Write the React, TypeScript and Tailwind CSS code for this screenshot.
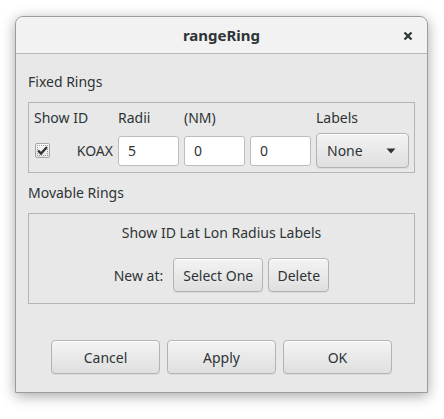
import React from "react";

const font = { fontFamily: '"Noto Sans", "Open Sans", sans-serif' };

function Btn({ children, className = "" }: { children: React.ReactNode; className?: string }) {
  return (
    <div
      className={`flex items-center rounded-[4px] border border-[#b3b3b3] bg-gradient-to-b from-[#f3f3f3] to-[#dfdfdf] text-[14px] text-[#2e3436] shadow-[inset_0_1px_0_#ffffff,0_1px_0_rgba(0,0,0,0.06)] ${className}`}
    >
      {children}
    </div>
  );
}

function Input({ value }: { value: string }) {
  return (
    <div className="flex h-[30px] w-[61px] items-center rounded-[3px] border border-[#bdbdbd] bg-white pl-[9px] text-[14px] text-[#2e3436]">
      {value}
    </div>
  );
}

export default function App() {
  return (
    <div className="h-[419px] w-[444px] bg-white pl-[15px] pt-[16px]" style={font}>
      <div className="flex h-[377px] w-[413px] flex-col overflow-hidden rounded-t-[8px] border border-[#9c9c9c] bg-[#e8e8e8] shadow-[0_3px_14px_rgba(0,0,0,0.35)]">
        {/* Title bar */}
        <div className="relative flex h-[37px] shrink-0 items-center justify-center border-b border-[#b9b9b9] bg-[#f2f2f2]">
          <span className="text-[15px] font-bold text-[#2e3436]">rangeRing</span>
          <svg className="absolute right-[14px] top-[14px]" width="10" height="10" viewBox="0 0 10 10">
            <path d="M1.5 1.5 L8.5 8.5 M8.5 1.5 L1.5 8.5" stroke="#2e3436" strokeWidth="2.2" strokeLinecap="butt" />
          </svg>
        </div>

        {/* Body */}
        <div className="flex flex-1 flex-col px-[12px] pt-[18px] text-[14px] text-[#2e3436]">
          <div className="h-[20px] leading-[20px]">Fixed Rings</div>
          <div className="mt-[10px] h-[71px] border border-[#b5b5b5] pl-[5px] pt-[5px]">
            <div className="flex h-[20px] leading-[20px]">
              <div className="w-[84px]">Show ID</div>
              <div className="w-[66px]">Radii</div>
              <div className="w-[132px]">(NM)</div>
              <div>Labels</div>
            </div>
            <div className="mt-[5px] flex items-center">
              <div className="ml-[1px] flex h-[15px] w-[15px] items-center justify-center rounded-[2px] border border-[#a8a8a8] bg-gradient-to-b from-[#fafafa] to-[#e4e4e4] outline outline-1 outline-dotted outline-[#9a9a9a] outline-offset-[-3px]">
                <svg width="11" height="9" viewBox="0 0 11 9">
                  <path d="M1 4.5 L4 7.5 L10 1" stroke="#2e3436" strokeWidth="2.4" fill="none" />
                </svg>
              </div>
              <div className="w-[63px] text-right">KOAX</div>
              <div className="ml-[5px]">
                <Input value="5" />
              </div>
              <div className="ml-[5px]">
                <Input value="0" />
              </div>
              <div className="ml-[5px]">
                <Input value="0" />
              </div>
              <Btn className="ml-[5px] h-[35px] w-[93px] justify-between pl-[10px] pr-[12px]">
                <span>None</span>
                <svg width="10" height="6" viewBox="0 0 10 6">
                  <path d="M0.5 0.5 L9.5 0.5 L5 5.5 Z" fill="#2e3436" />
                </svg>
              </Btn>
            </div>
          </div>

          <div className="mt-[10px] h-[20px] leading-[20px]">Movable Rings</div>
          <div className="mt-[10px] flex h-[91px] flex-col items-center border border-[#b5b5b5] pt-[9px]">
            <div className="h-[20px] leading-[20px]">Show ID Lat Lon Radius Labels</div>
            <div className="mt-[15px] flex items-center">
              <span className="mr-[10px]">New at:</span>
              <Btn className="h-[34px] w-[90px] justify-center">Select One</Btn>
              <Btn className="ml-[5px] h-[34px] w-[61px] justify-center">Delete</Btn>
            </div>
          </div>

          <div className="mt-[36px] flex justify-center gap-[7px]">
            <Btn className="h-[34px] w-[109px] justify-center">Cancel</Btn>
            <Btn className="h-[34px] w-[109px] justify-center">Apply</Btn>
            <Btn className="h-[34px] w-[109px] justify-center">OK</Btn>
          </div>
        </div>
      </div>
    </div>
  );
}
